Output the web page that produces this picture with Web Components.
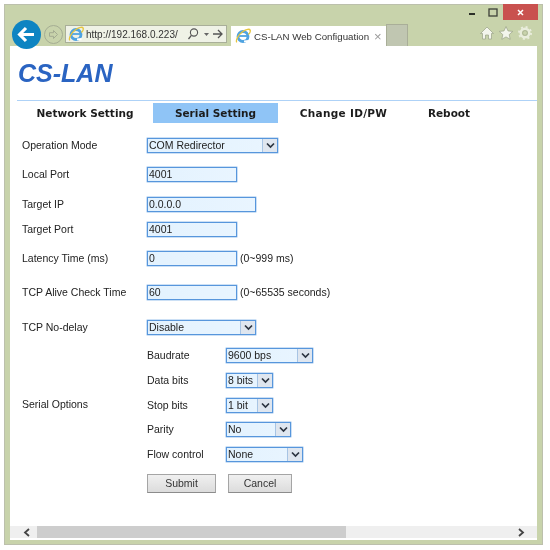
<!DOCTYPE html>
<html><head><meta charset="utf-8"><title>CS-LAN</title>
<style>
html,body{margin:0;padding:0;background:#fff;width:550px;height:550px;overflow:hidden}
body{font-family:"Liberation Sans",Arial,sans-serif;padding:4px 0 0 4px;box-sizing:border-box;color:#333}
ie-window{filter:blur(.25px)}
</style></head><body>
<ie-window>
  <cs-header></cs-header>
  <cs-tabs></cs-tabs>
  <cs-form>
    <cs-row label="Operation Mode" gap="15"><cs-select w="131" value="COM Redirector"></cs-select></cs-row>
    <cs-row label="Local Port" gap="14"><cs-input w="90" value="4001"></cs-input></cs-row>
    <cs-row label="Target IP" gap="15"><cs-input w="109" value="0.0.0.0"></cs-input></cs-row>
    <cs-row label="Target Port" gap="10"><cs-input w="90" value="4001"></cs-input></cs-row>
    <cs-row label="Latency Time (ms)" gap="14"><cs-input w="90" value="0"></cs-input><span>(0~999 ms)</span></cs-row>
    <cs-row label="TCP Alive Check Time" gap="19"><cs-input w="90" value="60"></cs-input><span>(0~65535 seconds)</span></cs-row>
    <cs-row label="TCP No-delay" gap="20"><cs-select w="109" value="Disable"></cs-select></cs-row>
    <cs-options>
      <cs-subrow label="Baudrate" gap="0"><cs-select w="87" value="9600 bps"></cs-select></cs-subrow>
      <cs-subrow label="Data bits" gap="10"><cs-select w="47" value="8 bits"></cs-select></cs-subrow>
      <cs-subrow label="Stop bits" gap="10"><cs-select w="47" value="1 bit"></cs-select></cs-subrow>
      <cs-subrow label="Parity" gap="9"><cs-select w="65" value="No"></cs-select></cs-subrow>
      <cs-subrow label="Flow control" gap="10"><cs-select w="77" value="None"></cs-select></cs-subrow>
    </cs-options>
    <cs-actions></cs-actions>
  </cs-form>
</ie-window>
<script>
const def=(name,html,init)=>customElements.define(name,class extends HTMLElement{
  constructor(){super();this.attachShadow({mode:'open'});}
  connectedCallback(){
    if(this._r)return;this._r=1;
    this.shadowRoot.innerHTML=typeof html==='function'?html(this):html;
    init&&init(this);
  }
});
const ieLogo=`<svg width="16" height="16" viewBox="0 0 16 16"><circle cx="8" cy="8.500" r="5" fill="none" stroke="#4fa3e0" stroke-width="2.800"/><path d="M4 8h8.400" stroke="#4fa3e0" stroke-width="1.800"/><path d="M9 12.400l4.500-.4v2.200h-4.500z" fill="#fff"/><path d="M1.800 14.300C.3 12.500 3.500 6.500 7.500 3.700S14.700.7 15.200 2.200c.4 1.200-.6 3-1.800 4.300" fill="none" stroke="#e6c53e" stroke-width="1.300"/></svg>`;

def('ie-window',`<style>
:host{display:flex;flex-direction:column;width:539px;height:541px;box-sizing:border-box;background:#c8d3ab;box-shadow:inset 0 0 0 1px #bcc0ac}
.top{height:21px;display:flex;justify-content:flex-end;align-items:flex-start;padding-right:5px;flex:none}
.ctl{width:21px;height:16px;display:flex;align-items:center;justify-content:center}
.close{width:35px;height:16px;background:#c9514f;display:flex;align-items:center;justify-content:center}
.nav{height:21px;flex:none;display:flex;align-items:flex-start;position:relative;padding-left:8px}
.back{width:29px;height:29px;border-radius:50%;background:#0d84c2;margin-top:-5px;position:relative;z-index:2;display:flex;align-items:center;justify-content:center;flex:none}
.fwd{width:19px;height:19px;border-radius:50%;border:1px solid #a5ad93;box-sizing:border-box;margin:0 0 0 3px;display:flex;align-items:center;justify-content:center;flex:none}
.addr{width:162px;height:18px;box-sizing:border-box;margin:0 0 0 2px;background:#eff2e6;border:1px solid #a9af99;display:flex;align-items:center;font-size:10px;color:#333;padding-left:2px;flex:none}
.addr span{margin-left:2px;width:98px;white-space:nowrap}
.addr svg{flex:none}
.tab{width:155px;height:20px;box-sizing:border-box;margin:1px 0 0 4px;background:#fff;display:flex;align-items:center;font-size:9.700px;color:#333;padding-left:4px;flex:none}
.tab b{font-weight:normal;margin-left:2px;width:120px;white-space:nowrap;padding-left:1px}
.tab i{font-style:normal;color:#9a9a9a;font-size:13px;line-height:13px}
.new{width:22px;height:22px;box-sizing:border-box;margin-top:-1px;background:#c0c6b1;border:1px solid #a9ae98;border-bottom:0;flex:none}
.tools{margin-left:auto;display:flex;gap:3px;padding:0 10px 0 0}
.page{flex:1;min-height:0;margin:0 6px 5px 6px;background:#fff;display:flex;flex-direction:column;position:relative}
.main{flex:1;min-height:0;overflow:hidden}
.bar{flex:none;height:12px;margin-bottom:2px;background:#efefef;display:flex;align-items:center;position:relative}
.thumb{position:absolute;left:27px;width:309px;top:0;bottom:0;background:#cdcdcd}
.bar svg{position:absolute;top:2px}
</style>
<div class="top">
  <div class="ctl"><svg width="8" height="8"><rect x="1" y="5" width="6" height="2" fill="#2c2f28"/></svg></div>
  <div class="ctl"><svg width="10" height="9"><rect x="1" y="1" width="8" height="7" fill="none" stroke="#3c3f38" stroke-width="1.300"/></svg></div>
  <div class="close"><svg width="9" height="9"><path d="M2 2l5 5m0-5l-5 5" stroke="#fff" stroke-width="1.500"/></svg></div>
</div>
<div class="nav">
  <div class="back"><svg width="19" height="17" viewBox="0 0 19 17"><path d="M9 2L2.600 8.500 9 15M3 8.500h14" fill="none" stroke="#fff" stroke-width="3.200"/></svg></div>
  <div class="fwd"><svg width="11" height="11" viewBox="0 0 11 11"><path d="M5.500 1.500l4 4-4 4V7.300H1.500V3.700h4z" fill="none" stroke="#a3ab91"/></svg></div>
  <div class="addr">${ieLogo}<span>http://192.168.0.223/</span>
    <svg width="44" height="14" viewBox="0 0 44 14" style="margin-left:7px"><circle cx="9" cy="5.500" r="3.600" fill="none" stroke="#555" stroke-width="1.100"/><path d="M6.400 8.400L3.500 12" stroke="#555" stroke-width="1.300"/><path d="M19 6h5l-2.500 3z" fill="#666"/><path d="M28 7h9M33 3l4 4-4 4" fill="none" stroke="#555" stroke-width="1.300"/></svg>
  </div>
  <div class="tab">${ieLogo}<b>CS-LAN Web Configuation</b><i>×</i></div>
  <div class="new"></div>
  <div class="tools">
    <svg width="16" height="16" viewBox="0 0 16 16"><path d="M8 2L1.500 8.500h2V14h3V10h3v4h3V8.500h2z" fill="#f3f5ec" stroke="#9aa288" stroke-width=".7"/></svg>
    <svg width="16" height="16" viewBox="0 0 16 16"><path d="M8 1.500l2 4.400 4.800.5-3.600 3.200 1 4.700L8 11.900l-4.200 2.400 1-4.700L1.200 6.400 6 5.900z" fill="#f3f5ec" stroke="#9aa288" stroke-width=".7"/></svg>
    <svg width="16" height="16" viewBox="0 0 16 16"><circle cx="8" cy="8" r="4.300" fill="none" stroke="#e9eddc" stroke-width="2.400"/><circle cx="8" cy="8" r="6" fill="none" stroke="#e9eddc" stroke-width="2" stroke-dasharray="2 2.700"/><circle cx="8" cy="8" r="2.400" fill="none" stroke="#9aa288" stroke-width=".6"/></svg>
  </div>
</div>
<div class="page">
  <div class="main"><slot></slot></div>
  <div class="bar"><div class="thumb"></div>
    <svg style="left:13px" width="8" height="9" viewBox="0 0 8 9"><path d="M6 1L2 4.500 6 8" fill="none" stroke="#444" stroke-width="1.800"/></svg>
    <svg style="left:507px" width="8" height="9" viewBox="0 0 8 9"><path d="M2 1l4 3.500L2 8" fill="none" stroke="#444" stroke-width="1.800"/></svg>
  </div>
</div>`);

def('cs-header',`<style>
:host{display:block;height:55px;margin-left:7px;border-bottom:1px solid #aed2f7;box-sizing:border-box}
h1{margin:0;padding:12px 0 0 1px;font:italic bold 25px/30px "Liberation Sans",Arial,sans-serif;color:#2a64c2}
</style><h1>CS-LAN</h1>`);

def('cs-tabs',`<style>
:host{display:flex;height:20px;margin-top:2px;padding-left:7px;font:bold 10.500px/20px "DejaVu Sans",Verdana,sans-serif;color:#1c1c1c}
div{text-align:center;white-space:nowrap;flex:none}
.a{width:136px}.b{width:125px;background:#8fc4f6}.c{width:131px;letter-spacing:.3px}.d{width:80px}
</style><div class="a">Network Setting</div><div class="b">Serial Setting</div><div class="c">Change ID/PW</div><div class="d">Reboot</div>`);

def('cs-form',`<style>:host{display:block;padding:0 0 0 12px;font:10.500px/15px "Liberation Sans",Arial,sans-serif;color:#222}</style><slot></slot>`);

def('cs-row',h=>`<style>
:host{display:flex;align-items:center;min-height:15px;margin-top:${h.getAttribute('gap')||0}px}
.l{width:125px;flex:none;white-space:nowrap;margin-top:-1px}
.c{display:flex;align-items:center}
::slotted(span){margin-left:3px;white-space:nowrap}
</style><div class="l">${h.getAttribute('label')||''}</div><div class="c"><slot></slot></div>`);

def('cs-options',`<style>
:host{display:flex;align-items:center;margin-top:13px}
.l{width:125px;flex:none;margin-top:-1px}
</style><div class="l">Serial Options</div><div><slot></slot></div>`);

def('cs-subrow',h=>`<style>
:host{display:flex;align-items:center;margin-top:${h.getAttribute('gap')||0}px}
.l{width:79px;flex:none;white-space:nowrap;margin-top:-1px}
</style><div class="l">${h.getAttribute('label')||''}</div><slot></slot>`);

const boxCss=`box-sizing:border-box;height:15px;background:linear-gradient(90deg,#e3f2fe,#e9f5ff);border:1px solid #5796dc;box-shadow:0 0 0 .4px #7fb1e6;font:10.500px/13px "Liberation Sans",Arial,sans-serif;color:#222;white-space:nowrap;`;
def('cs-input',h=>`<style>
:host{display:block;width:${h.getAttribute('w')}px;${boxCss}padding-left:1px}
</style>${h.getAttribute('value')||''}`);

def('cs-select',h=>`<style>
:host{display:flex;width:${h.getAttribute('w')}px;${boxCss}padding-left:1px}
.t{flex:1;min-width:0}
.a{flex:none;width:14px;background:#dfe6ef;border-left:1px solid #a7c4e4;display:flex;align-items:center;justify-content:center}
</style><div class="t">${h.getAttribute('value')||''}</div><div class="a"><svg width="9" height="7" viewBox="0 0 9 7"><path d="M1 1.500l3.500 3.500L8 1.500" fill="none" stroke="#2c3440" stroke-width="1.700"/></svg></div>`);

def('cs-actions',`<style>
:host{display:flex;margin:12px 0 0 125px;font:10.500px/17px "Liberation Sans",Arial,sans-serif;color:#333}
div{height:19px;box-sizing:border-box;border:1px solid #a5a5a5;border-bottom-color:#8c8c8c;background:linear-gradient(#f0f0f0,#dcdcdc);text-align:center}
.s{width:69px;margin-right:12px}.c{width:64px}
</style><div class="s">Submit</div><div class="c">Cancel</div>`);
</script>
</body></html>
